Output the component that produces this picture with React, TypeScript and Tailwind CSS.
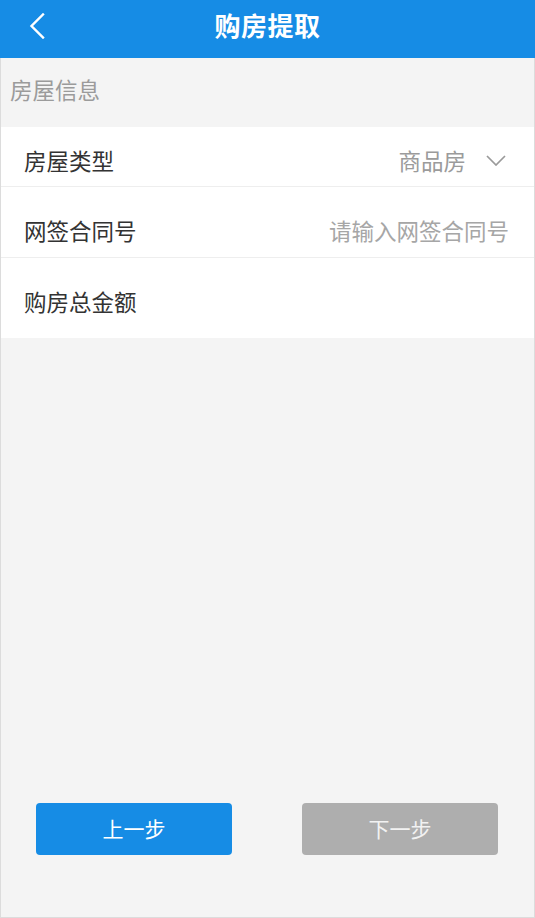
import React from 'react'

const cjk = { fontFamily: '"Noto Sans CJK SC", "Noto Sans", sans-serif' }

function BackIcon() {
  return (
    <svg width="16" height="26" viewBox="0 0 16 26" fill="none">
      <path d="M14 1.5 L2.5 13 L14 24.5" stroke="#fff" strokeWidth="2.4" strokeLinecap="square" />
    </svg>
  )
}

function ChevronDown() {
  return (
    <svg width="20" height="11" viewBox="0 0 20 11" fill="none">
      <path d="M1 1 L10 10 L19 1" stroke="#9a9a9a" strokeWidth="1.7" />
    </svg>
  )
}

export default function App() {
  return (
    <div className="flex h-[918px] w-full flex-col bg-[#f4f4f4]" style={cjk}>
      {/* Header */}
      <header className="relative flex h-[58px] shrink-0 items-center justify-center bg-[#168ce5] pb-[8px]">
        <button className="absolute left-[29px] top-[13px] flex items-center">
          <BackIcon />
        </button>
        <h1 className="text-[26px] font-bold leading-none tracking-[0.5px] text-white">购房提取</h1>
      </header>

      <div className="flex flex-1 flex-col border-x border-b border-[#dcdcdc]">
        {/* Section title */}
        <div className="flex h-[69px] items-center pb-[6px] pl-[9px] text-[22.5px] text-[#9b9b9b]">房屋信息</div>

        {/* Form card */}
        <div className="flex flex-col bg-white">
          <div className="flex h-[60px] items-center justify-between border-b border-[#eeeeee] pl-[23px] pr-[28px] pt-[8px]">
            <span className="text-[22.5px] text-[#333]">房屋类型</span>
            <div className="flex items-center gap-[20px]">
              <span className="text-[22.5px] text-[#9b9b9b]">商品房</span>
              <ChevronDown />
            </div>
          </div>
          <div className="flex h-[71px] items-center justify-between border-b border-[#eeeeee] pl-[23px] pr-[25px] pt-[18px]">
            <span className="text-[22.5px] text-[#333]">网签合同号</span>
            <span className="text-[22.5px] text-[#a6a6a6]">请输入网签合同号</span>
          </div>
          <div className="flex h-[80px] items-center pb-[12px] pl-[23px] pt-[20px]">
            <span className="text-[22.5px] text-[#333]">购房总金额</span>
          </div>
        </div>

        <div className="flex-1" />

        {/* Buttons */}
        <div className="flex justify-between pb-[62px] pl-[35px] pr-[36px]">
          <button className="flex h-[52px] w-[196px] items-center justify-center rounded-[4px] bg-[#168ce5] text-[21px] text-white">
            上一步
          </button>
          <button className="flex h-[52px] w-[196px] items-center justify-center rounded-[4px] bg-[#aeaeae] text-[21px] text-[#f2f2f2]">
            下一步
          </button>
        </div>
      </div>
    </div>
  )
}
